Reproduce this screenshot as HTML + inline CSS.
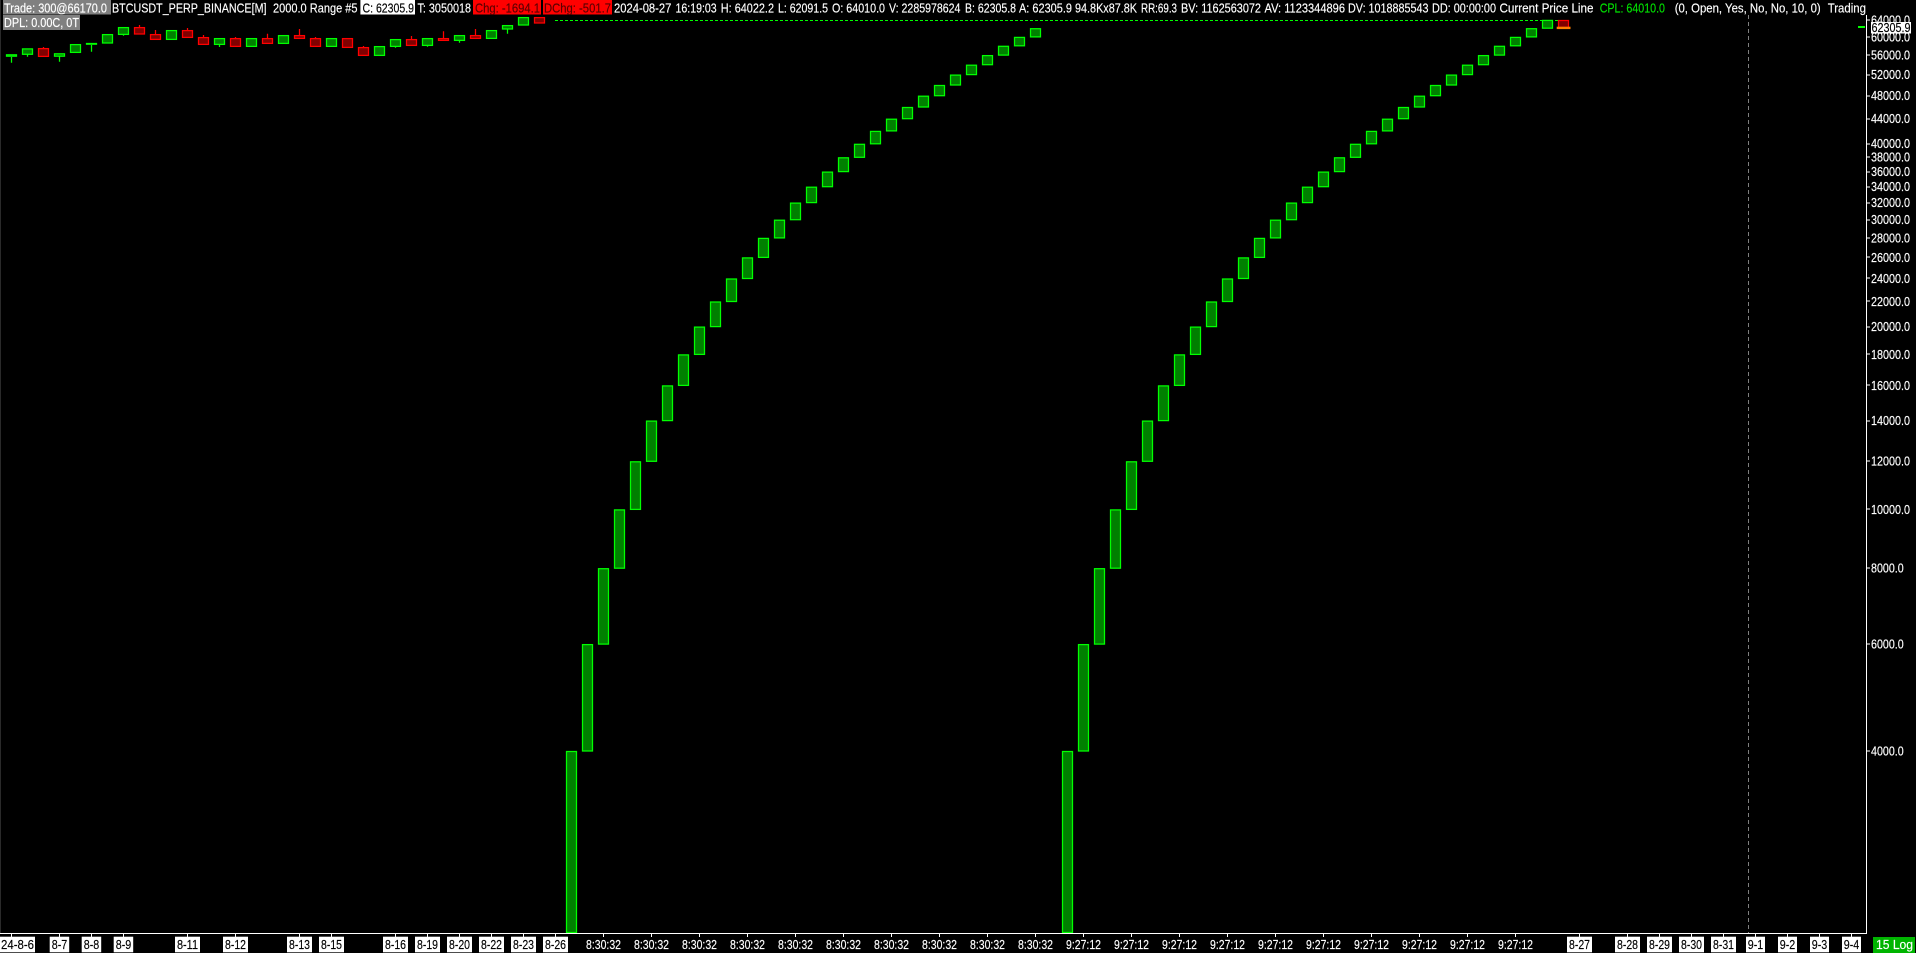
<!DOCTYPE html>
<html>
<head>
<meta charset="utf-8">
<title>BTCUSDT_PERP_BINANCE Chart</title>
<style>
html,body{margin:0;padding:0;background:#000;width:1916px;height:953px;overflow:hidden}
svg{display:block;position:absolute;left:0;top:0}
text{font-family:"Liberation Sans",sans-serif;font-size:12.5px;fill:#fff;stroke:#fff;stroke-width:.15}
.g{fill:#008000;stroke:#00ff00;stroke-width:1.25}
.r{fill:#800000;stroke:#ff0000;stroke-width:1.25}
text.k{fill:#000;stroke:#000}
text.d{fill:#5a0000;stroke:#5a0000}
text.p{fill:#00e000;stroke:#00e000}
.t{text-anchor:middle}
</style>
</head>
<body>
<svg width="1916" height="953" viewBox="0 0 1916 953" xmlns="http://www.w3.org/2000/svg">
<defs>
<g id="c" class="g">
<rect x="582.5" y="644.6" width="10" height="106.4"/>
<rect x="598.5" y="568.7" width="10" height="75.4"/>
<rect x="614.5" y="509.9" width="10" height="58.3"/>
<rect x="630.5" y="461.8" width="10" height="47.6"/>
<rect x="646.5" y="421.1" width="10" height="40.2"/>
<rect x="662.5" y="385.9" width="10" height="34.7"/>
<rect x="678.5" y="354.9" width="10" height="30.5"/>
<rect x="694.5" y="327.1" width="10" height="27.3"/>
<rect x="710.5" y="302" width="10" height="24.6"/>
<rect x="726.5" y="279" width="10" height="22.5"/>
<rect x="742.5" y="257.9" width="10" height="20.6"/>
<rect x="758.5" y="238.4" width="10" height="19"/>
<rect x="774.5" y="220.2" width="10" height="17.7"/>
<rect x="790.5" y="203.1" width="10" height="16.6"/>
<rect x="806.5" y="187.2" width="10" height="15.4"/>
<rect x="822.5" y="172.1" width="10" height="14.6"/>
<rect x="838.5" y="157.8" width="10" height="13.8"/>
<rect x="854.5" y="144.3" width="10" height="13"/>
<rect x="870.5" y="131.4" width="10" height="12.4"/>
<rect x="886.5" y="119.2" width="10" height="11.7"/>
<rect x="902.5" y="107.5" width="10" height="11.2"/>
<rect x="918.5" y="96.2" width="10" height="10.8"/>
<rect x="934.5" y="85.5" width="10" height="10.2"/>
<rect x="950.5" y="75.1" width="10" height="9.9"/>
<rect x="966.5" y="65.2" width="10" height="9.4"/>
<rect x="982.5" y="55.6" width="10" height="9.1"/>
<rect x="998.5" y="46.3" width="10" height="8.8"/>
<rect x="1014.5" y="37.4" width="10" height="8.4"/>
<rect x="1030.5" y="28.7" width="10" height="8.2"/>
</g>
</defs>

<!-- dashed current price line and vertical session line -->
<path d="M555 20.5H1558" stroke="#00ff00" stroke-width="1" stroke-dasharray="3 2" fill="none"/>
<path d="M1748.5 15V933" stroke="#808080" stroke-width="1" stroke-dasharray="4 3" fill="none"/>

<!-- wicks -->
<path d="M11.5 57V62.7M27.5 54V56.7M59.5 56V61.7M91.5 45V51.7M123.5 34V35.7M219.5 44V47M395.5 46V47.7M427.5 45V46.7M459.5 40V42.7M507.5 29V33.7" stroke="#00ff00" stroke-width="1.25" fill="none"/>
<path d="M43.5 47V49M139.5 25V28M155.5 30V35M187.5 28V31M203.5 35V38M235.5 37V39M267.5 33.7V39M299.5 29V36M315.5 37V39M363.5 46V48M411.5 36V40M443.5 31.3V39M475.5 29V36" stroke="#ff0000" stroke-width="1.25" fill="none"/>

<!-- small bars on the left -->
<rect class="g" x="6.5" y="54.8" width="10" height="1.4"/>
<rect class="g" x="22.5" y="48.9" width="10" height="5.4"/>
<rect class="r" x="38.5" y="48.6" width="10" height="7.8"/>
<rect class="g" x="54.5" y="53.8" width="10" height="2.4"/>
<rect class="g" x="70.5" y="44.6" width="10" height="7.8"/>
<rect class="g" x="86.5" y="43.5" width="10" height="0.7"/>
<rect class="g" x="102.5" y="34.6" width="10" height="8.4"/>
<rect class="g" x="118.5" y="27.6" width="10" height="6.8"/>
<rect class="r" x="134.5" y="27.6" width="10" height="6.4"/>
<rect class="r" x="150.5" y="34.6" width="10" height="4.8"/>
<rect class="g" x="166.5" y="30.6" width="10" height="8.8"/>
<rect class="r" x="182.5" y="30.6" width="10" height="6.8"/>
<rect class="r" x="198.5" y="37.6" width="10" height="6.8"/>
<rect class="g" x="214.5" y="38.6" width="10" height="5.8"/>
<rect class="r" x="230.5" y="38.6" width="10" height="7.8"/>
<rect class="g" x="246.5" y="38.6" width="10" height="7.8"/>
<rect class="r" x="262.5" y="38.6" width="10" height="4.8"/>
<rect class="g" x="278.5" y="35.6" width="10" height="7.8"/>
<rect class="r" x="294.5" y="35.6" width="10" height="2.8"/>
<rect class="r" x="310.5" y="38.6" width="10" height="7.8"/>
<rect class="g" x="326.5" y="38.6" width="10" height="7.8"/>
<rect class="r" x="342.5" y="38.6" width="10" height="8.8"/>
<rect class="r" x="358.5" y="47.6" width="10" height="7.8"/>
<rect class="g" x="374.5" y="46.6" width="10" height="8.8"/>
<rect class="g" x="390.5" y="39.6" width="10" height="6.8"/>
<rect class="r" x="406.5" y="39.6" width="10" height="5.8"/>
<rect class="g" x="422.5" y="38.6" width="10" height="6.8"/>
<rect class="r" x="438.5" y="38.6" width="10" height="1.8"/>
<rect class="g" x="454.5" y="35.6" width="10" height="4.8"/>
<rect class="r" x="470.5" y="35.6" width="10" height="2.8"/>
<rect class="g" x="486.5" y="30.6" width="10" height="7.8"/>
<rect class="g" x="502.5" y="25.6" width="10" height="3.4"/>
<rect class="g" x="518.5" y="17.6" width="10" height="7.4"/>
<rect class="r" x="534.5" y="17.6" width="10" height="5.4"/>

<!-- tall bars -->
<rect class="g" x="566.5" y="751.5" width="10" height="181"/>
<rect class="g" x="1062.5" y="751.5" width="10" height="181"/>

<!-- curves -->
<use href="#c"/>
<use href="#c" x="496"/>
<rect class="g" x="1542.5" y="20.4" width="10" height="7.8"/>

<!-- last red bar with orange marker -->
<rect class="r" x="1558.5" y="20.5" width="10" height="7"/>
<rect x="1556.7" y="26.7" width="13.8" height="2.4" fill="#ff8000"/>

<!-- top row boxes -->
<rect x="3" y="0" width="108" height="14.5" fill="#808080"/>
<rect x="3" y="15" width="77" height="15" fill="#808080"/>
<rect x="360.4" y="0" width="54.6" height="14.5" fill="#ffffff"/>
<rect x="473" y="0" width="68" height="14.5" fill="#ff0000"/>
<rect x="543" y="0" width="69" height="14.5" fill="#ff0000"/>

<!-- top row text -->
<text x="4" y="12.6" textLength="103" lengthAdjust="spacingAndGlyphs">Trade: 300@66170.0</text>
<text x="112" y="12.6" textLength="154.5" lengthAdjust="spacingAndGlyphs">BTCUSDT_PERP_BINANCE[M]</text>
<text x="273" y="12.6" textLength="84.5" lengthAdjust="spacingAndGlyphs">2000.0 Range #5</text>
<text class="k" x="362.5" y="12.6" textLength="51.5" lengthAdjust="spacingAndGlyphs">C: 62305.9</text>
<text x="417.5" y="12.6" textLength="53.5" lengthAdjust="spacingAndGlyphs">T: 3050018</text>
<text class="d" x="475" y="12.6" textLength="65" lengthAdjust="spacingAndGlyphs">Chg: -1694.1</text>
<text class="d" x="544" y="12.6" textLength="67" lengthAdjust="spacingAndGlyphs">DChg: -501.7</text>
<text x="614" y="12.6" textLength="57.4" lengthAdjust="spacingAndGlyphs">2024-08-27</text>
<text x="675.5" y="12.6" textLength="41.2" lengthAdjust="spacingAndGlyphs">16:19:03</text>
<text x="720.8" y="12.6" textLength="53.2" lengthAdjust="spacingAndGlyphs">H: 64022.2</text>
<text x="778" y="12.6" textLength="50" lengthAdjust="spacingAndGlyphs">L: 62091.5</text>
<text x="832" y="12.6" textLength="53" lengthAdjust="spacingAndGlyphs">O: 64010.0</text>
<text x="889" y="12.6" textLength="71.4" lengthAdjust="spacingAndGlyphs">V: 2285978624</text>
<text x="965" y="12.6" textLength="51" lengthAdjust="spacingAndGlyphs">B: 62305.8</text>
<text x="1019" y="12.6" textLength="53" lengthAdjust="spacingAndGlyphs">A: 62305.9</text>
<text x="1075" y="12.6" textLength="62" lengthAdjust="spacingAndGlyphs">94.8Kx87.8K</text>
<text x="1141" y="12.6" textLength="36" lengthAdjust="spacingAndGlyphs">RR:69.3</text>
<text x="1181" y="12.6" textLength="80" lengthAdjust="spacingAndGlyphs">BV: 1162563072</text>
<text x="1264.5" y="12.6" textLength="80.5" lengthAdjust="spacingAndGlyphs">AV: 1123344896</text>
<text x="1348" y="12.6" textLength="80.5" lengthAdjust="spacingAndGlyphs">DV: 1018885543</text>
<text x="1432" y="12.6" textLength="64" lengthAdjust="spacingAndGlyphs">DD: 00:00:00</text>
<text x="1499.5" y="12.6" textLength="94" lengthAdjust="spacingAndGlyphs">Current Price Line</text>
<text class="p" x="1599.7" y="12.6" textLength="65.3" lengthAdjust="spacingAndGlyphs">CPL: 64010.0</text>
<text x="1674.7" y="12.6" textLength="146" lengthAdjust="spacingAndGlyphs">(0, Open, Yes, No, No, 10, 0)</text>
<text x="1827.7" y="12.6" textLength="38.3" lengthAdjust="spacingAndGlyphs">Trading</text>
<text x="4" y="27" textLength="75" lengthAdjust="spacingAndGlyphs">DPL: 0.00C, 0T</text>

<!-- axes -->
<rect x="1866" y="15" width="1" height="919" fill="#ffffff"/>
<rect x="0" y="933" width="1867" height="1" fill="#ffffff"/>
<rect x="0" y="0" width="1" height="933" fill="#2a2a2a"/>

<!-- price ticks -->
<path d="M1867 20H1870M1867 37H1870M1867 55H1870M1867 75H1870M1867 96H1870M1867 119H1870M1867 144H1870M1867 157H1870M1867 172H1870M1867 187H1870M1867 203H1870M1867 220H1870M1867 238H1870M1867 257H1870M1867 278H1870M1867 301H1870M1867 327H1870M1867 354H1870M1867 385H1870M1867 421H1870M1867 461H1870M1867 509H1870M1867 568H1870M1867 644H1870M1867 751H1870" stroke="#fff" stroke-width="1" fill="none"/>

<!-- price labels -->
<text x="1871" y="24.3" textLength="39" lengthAdjust="spacingAndGlyphs">64000.0</text>
<text x="1871" y="41.3" textLength="39" lengthAdjust="spacingAndGlyphs">60000.0</text>
<text x="1871" y="59.5" textLength="39" lengthAdjust="spacingAndGlyphs">56000.0</text>
<text x="1871" y="79" textLength="39" lengthAdjust="spacingAndGlyphs">52000.0</text>
<text x="1871" y="100.2" textLength="39" lengthAdjust="spacingAndGlyphs">48000.0</text>
<text x="1871" y="123.2" textLength="39" lengthAdjust="spacingAndGlyphs">44000.0</text>
<text x="1871" y="148.2" textLength="39" lengthAdjust="spacingAndGlyphs">40000.0</text>
<text x="1871" y="161.7" textLength="39" lengthAdjust="spacingAndGlyphs">38000.0</text>
<text x="1871" y="176" textLength="39" lengthAdjust="spacingAndGlyphs">36000.0</text>
<text x="1871" y="191.1" textLength="39" lengthAdjust="spacingAndGlyphs">34000.0</text>
<text x="1871" y="207" textLength="39" lengthAdjust="spacingAndGlyphs">32000.0</text>
<text x="1871" y="224.1" textLength="39" lengthAdjust="spacingAndGlyphs">30000.0</text>
<text x="1871" y="242.3" textLength="39" lengthAdjust="spacingAndGlyphs">28000.0</text>
<text x="1871" y="261.8" textLength="39" lengthAdjust="spacingAndGlyphs">26000.0</text>
<text x="1871" y="282.9" textLength="39" lengthAdjust="spacingAndGlyphs">24000.0</text>
<text x="1871" y="305.9" textLength="39" lengthAdjust="spacingAndGlyphs">22000.0</text>
<text x="1871" y="331" textLength="39" lengthAdjust="spacingAndGlyphs">20000.0</text>
<text x="1871" y="358.8" textLength="39" lengthAdjust="spacingAndGlyphs">18000.0</text>
<text x="1871" y="389.8" textLength="39" lengthAdjust="spacingAndGlyphs">16000.0</text>
<text x="1871" y="425" textLength="39" lengthAdjust="spacingAndGlyphs">14000.0</text>
<text x="1871" y="465.7" textLength="39" lengthAdjust="spacingAndGlyphs">12000.0</text>
<text x="1871" y="513.8" textLength="39" lengthAdjust="spacingAndGlyphs">10000.0</text>
<text x="1871" y="572.6" textLength="32.7" lengthAdjust="spacingAndGlyphs">8000.0</text>
<text x="1871" y="648.5" textLength="32.7" lengthAdjust="spacingAndGlyphs">6000.0</text>
<text x="1871" y="755.4" textLength="32.7" lengthAdjust="spacingAndGlyphs">4000.0</text>

<!-- current price marker -->
<rect x="1858" y="26" width="7" height="2" fill="#00ff00"/>
<rect x="1871" y="22" width="40" height="11.5" fill="#ffffff"/>
<text class="k" x="1871.5" y="32" textLength="39" lengthAdjust="spacingAndGlyphs">62305.9</text>

<!-- time ticks -->
<path d="M11.5 934V937M59.5 934V937M91.5 934V937M123.5 934V937M187.5 934V937M235.5 934V937M299.5 934V937M331.5 934V937M395.5 934V937M427.5 934V937M459.5 934V937M491.5 934V937M523.5 934V937M555.5 934V937M603.5 934V937M651.5 934V937M699.5 934V937M747.5 934V937M795.5 934V937M843.5 934V937M891.5 934V937M939.5 934V937M987.5 934V937M1035.5 934V937M1083.5 934V937M1131.5 934V937M1179.5 934V937M1227.5 934V937M1275.5 934V937M1323.5 934V937M1371.5 934V937M1419.5 934V937M1467.5 934V937M1515.5 934V937M1579.5 934V937M1627.5 934V937M1659.5 934V937M1691.5 934V937M1723.5 934V937M1755.5 934V937M1787.5 934V937M1819.5 934V937M1851.5 934V937" stroke="#fff" stroke-width="1" fill="none"/>

<!-- date boxes -->
<g fill="#ffffff">
<rect x="0" y="936.7" width="35" height="15.6"/>
<rect x="49.7" y="936.7" width="19.5" height="15.6"/>
<rect x="81.7" y="936.7" width="19.5" height="15.6"/>
<rect x="113.7" y="936.7" width="19.5" height="15.6"/>
<rect x="175" y="936.7" width="25" height="15.6"/>
<rect x="223" y="936.7" width="25" height="15.6"/>
<rect x="287" y="936.7" width="25" height="15.6"/>
<rect x="319" y="936.7" width="25" height="15.6"/>
<rect x="383" y="936.7" width="25" height="15.6"/>
<rect x="415" y="936.7" width="25" height="15.6"/>
<rect x="447" y="936.7" width="25" height="15.6"/>
<rect x="479" y="936.7" width="25" height="15.6"/>
<rect x="511" y="936.7" width="25" height="15.6"/>
<rect x="543" y="936.7" width="25" height="15.6"/>
<rect x="1567" y="936.7" width="25" height="15.6"/>
<rect x="1615" y="936.7" width="25" height="15.6"/>
<rect x="1647" y="936.7" width="25" height="15.6"/>
<rect x="1679" y="936.7" width="25" height="15.6"/>
<rect x="1711" y="936.7" width="25" height="15.6"/>
<rect x="1746" y="936.7" width="19" height="15.6"/>
<rect x="1778" y="936.7" width="19" height="15.6"/>
<rect x="1810" y="936.7" width="19" height="15.6"/>
<rect x="1842" y="936.7" width="19" height="15.6"/>
</g>

<!-- date labels -->
<text class="k" x="1" y="948.8" textLength="33" lengthAdjust="spacingAndGlyphs">24-8-6</text>
<text class="k t" x="59.5" y="948.8" textLength="15.5" lengthAdjust="spacingAndGlyphs">8-7</text>
<text class="k t" x="91.5" y="948.8" textLength="15.5" lengthAdjust="spacingAndGlyphs">8-8</text>
<text class="k t" x="123.5" y="948.8" textLength="15.5" lengthAdjust="spacingAndGlyphs">8-9</text>
<text class="k t" x="187.5" y="948.8" textLength="21" lengthAdjust="spacingAndGlyphs">8-11</text>
<text class="k t" x="235.5" y="948.8" textLength="21" lengthAdjust="spacingAndGlyphs">8-12</text>
<text class="k t" x="299.5" y="948.8" textLength="21" lengthAdjust="spacingAndGlyphs">8-13</text>
<text class="k t" x="331.5" y="948.8" textLength="21" lengthAdjust="spacingAndGlyphs">8-15</text>
<text class="k t" x="395.5" y="948.8" textLength="21" lengthAdjust="spacingAndGlyphs">8-16</text>
<text class="k t" x="427.5" y="948.8" textLength="21" lengthAdjust="spacingAndGlyphs">8-19</text>
<text class="k t" x="459.5" y="948.8" textLength="21" lengthAdjust="spacingAndGlyphs">8-20</text>
<text class="k t" x="491.5" y="948.8" textLength="21" lengthAdjust="spacingAndGlyphs">8-22</text>
<text class="k t" x="523.5" y="948.8" textLength="21" lengthAdjust="spacingAndGlyphs">8-23</text>
<text class="k t" x="555.5" y="948.8" textLength="21" lengthAdjust="spacingAndGlyphs">8-26</text>
<text class="k t" x="1579.5" y="948.8" textLength="21" lengthAdjust="spacingAndGlyphs">8-27</text>
<text class="k t" x="1627.5" y="948.8" textLength="21" lengthAdjust="spacingAndGlyphs">8-28</text>
<text class="k t" x="1659.5" y="948.8" textLength="21" lengthAdjust="spacingAndGlyphs">8-29</text>
<text class="k t" x="1691.5" y="948.8" textLength="21" lengthAdjust="spacingAndGlyphs">8-30</text>
<text class="k t" x="1723.5" y="948.8" textLength="21" lengthAdjust="spacingAndGlyphs">8-31</text>
<text class="k t" x="1755.5" y="948.8" textLength="15.5" lengthAdjust="spacingAndGlyphs">9-1</text>
<text class="k t" x="1787.5" y="948.8" textLength="15.5" lengthAdjust="spacingAndGlyphs">9-2</text>
<text class="k t" x="1819.5" y="948.8" textLength="15.5" lengthAdjust="spacingAndGlyphs">9-3</text>
<text class="k t" x="1851.5" y="948.8" textLength="15.5" lengthAdjust="spacingAndGlyphs">9-4</text>

<!-- time labels -->
<text class="t" x="603.5" y="948.8" textLength="35" lengthAdjust="spacingAndGlyphs">8:30:32</text>
<text class="t" x="651.5" y="948.8" textLength="35" lengthAdjust="spacingAndGlyphs">8:30:32</text>
<text class="t" x="699.5" y="948.8" textLength="35" lengthAdjust="spacingAndGlyphs">8:30:32</text>
<text class="t" x="747.5" y="948.8" textLength="35" lengthAdjust="spacingAndGlyphs">8:30:32</text>
<text class="t" x="795.5" y="948.8" textLength="35" lengthAdjust="spacingAndGlyphs">8:30:32</text>
<text class="t" x="843.5" y="948.8" textLength="35" lengthAdjust="spacingAndGlyphs">8:30:32</text>
<text class="t" x="891.5" y="948.8" textLength="35" lengthAdjust="spacingAndGlyphs">8:30:32</text>
<text class="t" x="939.5" y="948.8" textLength="35" lengthAdjust="spacingAndGlyphs">8:30:32</text>
<text class="t" x="987.5" y="948.8" textLength="35" lengthAdjust="spacingAndGlyphs">8:30:32</text>
<text class="t" x="1035.5" y="948.8" textLength="35" lengthAdjust="spacingAndGlyphs">8:30:32</text>
<text class="t" x="1083.5" y="948.8" textLength="35" lengthAdjust="spacingAndGlyphs">9:27:12</text>
<text class="t" x="1131.5" y="948.8" textLength="35" lengthAdjust="spacingAndGlyphs">9:27:12</text>
<text class="t" x="1179.5" y="948.8" textLength="35" lengthAdjust="spacingAndGlyphs">9:27:12</text>
<text class="t" x="1227.5" y="948.8" textLength="35" lengthAdjust="spacingAndGlyphs">9:27:12</text>
<text class="t" x="1275.5" y="948.8" textLength="35" lengthAdjust="spacingAndGlyphs">9:27:12</text>
<text class="t" x="1323.5" y="948.8" textLength="35" lengthAdjust="spacingAndGlyphs">9:27:12</text>
<text class="t" x="1371.5" y="948.8" textLength="35" lengthAdjust="spacingAndGlyphs">9:27:12</text>
<text class="t" x="1419.5" y="948.8" textLength="35" lengthAdjust="spacingAndGlyphs">9:27:12</text>
<text class="t" x="1467.5" y="948.8" textLength="35" lengthAdjust="spacingAndGlyphs">9:27:12</text>
<text class="t" x="1515.5" y="948.8" textLength="35" lengthAdjust="spacingAndGlyphs">9:27:12</text>

<!-- scale mode -->
<rect x="1873" y="937" width="42" height="16" fill="#00b400"/>
<text x="1876" y="948.8" textLength="37" lengthAdjust="spacingAndGlyphs">15 Log</text>
</svg>
</body>
</html>
